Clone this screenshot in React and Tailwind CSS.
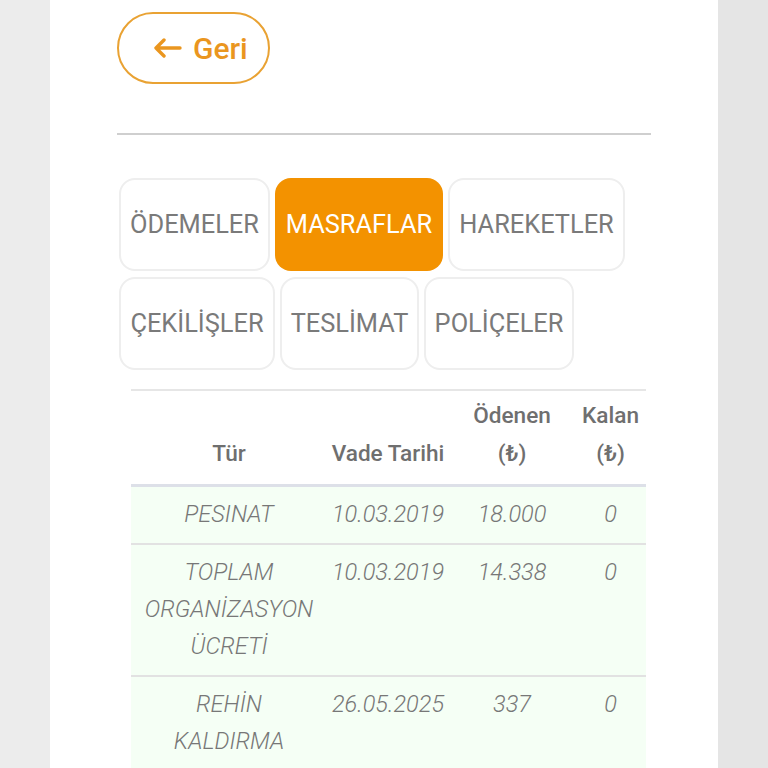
export default function App() {
  const tabs = [
    { label: 'ÖDEMELER', w: 'w-[151px]' },
    { label: 'MASRAFLAR', w: 'w-[168px]', active: true },
    { label: 'HAREKETLER', w: 'w-[177px]' },
    { label: 'ÇEKİLİŞLER', w: 'w-[156px]' },
    { label: 'TESLİMAT', w: 'w-[139px]' },
    { label: 'POLİÇELER', w: 'w-[150px]' },
  ];

  const rows = [
    { tur: 'PESINAT', vade: '10.03.2019', odenen: '18.000', kalan: '0' },
    { tur: 'TOPLAM ORGANİZASYON ÜCRETİ', vade: '10.03.2019', odenen: '14.338', kalan: '0' },
    { tur: 'REHİN KALDIRMA', vade: '26.05.2025', odenen: '337', kalan: '0' },
  ];

  return (
    <div className="flex min-h-screen font-['Roboto',sans-serif]">
      <div className="w-[50px] shrink-0 bg-[#ececec]" />
      <div className="w-[668px] shrink-0 bg-white px-[67px] pt-[12px]">
        {/* back button */}
        <button className="flex h-[72px] w-[153px] items-center gap-[11px] rounded-full border-2 border-[#e9a233] pl-[34px] text-[30px] font-medium text-[#ea961f]">
          <svg width="29" height="20" viewBox="0 0 29 20" fill="none">
            <path
              d="M27 10H3M11 2L3 10L11 18"
              stroke="#ea961f"
              strokeWidth="3.4"
              strokeLinecap="round"
              strokeLinejoin="round"
            />
          </svg>
          Geri
        </button>

        <div className="mt-[49px] h-[2px] bg-[#cfcfcf]" />

        {/* tabs */}
        <div className="ml-[2px] mt-[43px] flex flex-wrap gap-x-[5px] gap-y-[6px]">
          {tabs.map(t => (
            <div
              key={t.label}
              className={`flex h-[93px] items-center justify-center rounded-[16px] text-[25.4px] ${t.w} ${
                t.active
                  ? 'bg-[#f39200] text-white'
                  : 'border-2 border-[#eeeeee] text-[#7a7a7a]'
              }`}
            >
              {t.label}
            </div>
          ))}
        </div>

        {/* table */}
        <table className="ml-[14px] mt-[19px] w-[515px] table-fixed border-collapse">
          <colgroup>
            <col className="w-[196px]" />
            <col className="w-[122px]" />
            <col className="w-[126px]" />
            <col className="w-[71px]" />
          </colgroup>
          <thead>
            <tr className="border-t-2 border-b-[3px] border-t-[#e6e6e6] border-b-[#dde0e8] text-[22.6px] font-medium leading-[38px] text-[#6f6f6f]">
              <th className="px-[2px] pb-[11px] pt-[6px] align-bottom font-medium">Tür</th>
              <th className="px-[2px] pb-[11px] pt-[6px] align-bottom font-medium">Vade Tarihi</th>
              <th className="px-[2px] pb-[11px] pt-[6px] align-bottom font-medium">
                Ödenen
                <br />
                (₺)
              </th>
              <th className="px-[2px] pb-[11px] pt-[6px] align-bottom font-medium">
                Kalan
                <br />
                (₺)
              </th>
            </tr>
          </thead>
          <tbody>
            {rows.map(r => (
              <tr
                key={r.tur}
                className="border-b-2 border-[#e2e2e2] bg-[#f5fff5] text-[23.5px] font-light italic leading-[37px] text-[#777777]"
              >
                <td className="px-[10px] pb-[10px] pt-[9px] text-center align-top">{r.tur}</td>
                <td className="px-[2px] pb-[10px] pt-[9px] text-center align-top">{r.vade}</td>
                <td className="px-[2px] pb-[10px] pt-[9px] text-center align-top">{r.odenen}</td>
                <td className="px-[2px] pb-[10px] pt-[9px] text-center align-top">{r.kalan}</td>
              </tr>
            ))}
          </tbody>
        </table>
      </div>
      <div className="flex-1 bg-[#e5e5e5]" />
    </div>
  );
}
